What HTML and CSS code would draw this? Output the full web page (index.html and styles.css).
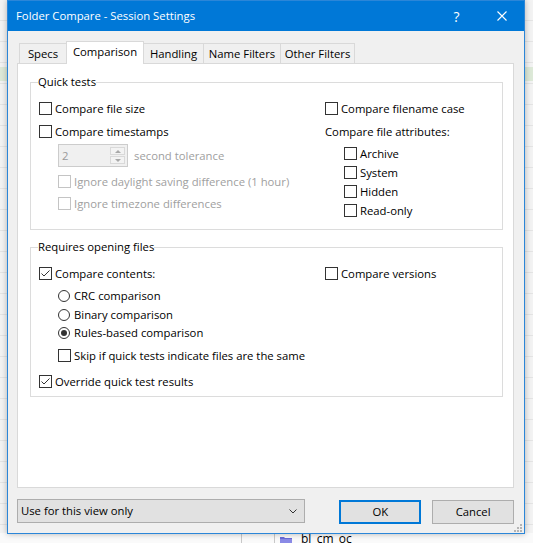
FILE: index.html
```html
<!DOCTYPE html>
<html lang="en">
<head>
<meta charset="utf-8">
<title>Folder Compare - Session Settings</title>
<link rel="stylesheet" href="styles.css">
</head>
<body>
<div class="desktop">
  <div class="app-list">
    <div class="app-sel"></div>
  </div>
  <div class="app-bottom">
    <span class="app-col app-col-a"></span>
    <span class="app-col app-col-b"></span>
    <svg class="app-folder" width="12" height="10" viewBox="0 0 12 10"><path d="M0 2h4l1 1h7v7H0z" fill="#6a6ad8"/><path d="M0 4h12v6H0z" fill="#8a8ae6"/></svg>
    <span class="app-name">bl_cm_oc</span>
  </div>
</div>

<div class="dialog">
  <div class="titlebar">
    <span class="title">Folder Compare - Session Settings</span>
    <span class="tb-btn tb-help">?</span>
    <span class="tb-btn tb-close"><svg width="10" height="10" viewBox="0 0 10 10"><path d="M0.5 0.5L9.5 9.5M9.5 0.5L0.5 9.5" stroke="#fff" stroke-width="1.1"/></svg></span>
  </div>

  <div class="dialog-body">
    <div class="tabs">
      <div class="tab tab-specs">Specs</div>
      <div class="tab tab-comparison active">Comparison</div>
      <div class="tab tab-handling">Handling</div>
      <div class="tab tab-names">Name Filters</div>
      <div class="tab tab-other">Other Filters</div>
    </div>

    <div class="panel">
      <fieldset class="group group-quick">
        <legend>Quick tests</legend>
        <div class="cols">
          <div class="col col-left">
            <div class="opt"><span class="box"></span><span>Compare file size</span></div>
            <div class="opt mt10"><span class="box"></span><span>Compare timestamps</span></div>
            <div class="spin-row indent">
              <div class="spin">
                <span class="spin-val">2</span>
                <span class="spin-btns"><span class="spin-btn"><i class="arr-up"></i></span><span class="spin-btn"><i class="arr-down"></i></span></span>
              </div>
              <span class="spin-lbl">second tolerance</span>
            </div>
            <div class="opt disabled indent mt8"><span class="box"></span><span>Ignore daylight saving difference (1 hour)</span></div>
            <div class="opt disabled indent mt9"><span class="box"></span><span>Ignore timezone differences</span></div>
          </div>
          <div class="col col-right">
            <div class="opt"><span class="box"></span><span>Compare filename case</span></div>
            <div class="opt mt10"><span>Compare file attributes:</span></div>
            <div class="attr-list">
              <div class="opt"><span class="box"></span><span>Archive</span></div>
              <div class="opt"><span class="box"></span><span>System</span></div>
              <div class="opt"><span class="box"></span><span>Hidden</span></div>
              <div class="opt"><span class="box"></span><span>Read-only</span></div>
            </div>
          </div>
        </div>
      </fieldset>

      <fieldset class="group group-open">
        <legend>Requires opening files</legend>
        <div class="cols">
          <div class="col col-left">
            <div class="opt"><span class="box"><svg width="11" height="11" viewBox="0 0 11 11"><path d="M1.5 5.5L4 8L9.5 2.5" fill="none" stroke="#333" stroke-width="1"/></svg></span><span>Compare contents:</span></div>
          </div>
          <div class="col col-right">
            <div class="opt"><span class="box"></span><span>Compare versions</span></div>
          </div>
        </div>
        <div class="opt radio-opt indent mt9"><span class="radio"></span><span>CRC comparison</span></div>
        <div class="opt radio-opt indent mt6"><span class="radio"></span><span>Binary comparison</span></div>
        <div class="opt radio-opt indent mt5"><span class="radio on"></span><span>Rules-based comparison</span></div>
        <div class="opt indent mt10"><span class="box"></span><span>Skip if quick tests indicate files are the same</span></div>
        <div class="opt mt13"><span class="box"><svg width="11" height="11" viewBox="0 0 11 11"><path d="M1.5 5.5L4 8L9.5 2.5" fill="none" stroke="#333" stroke-width="1"/></svg></span><span>Override quick test results</span></div>
      </fieldset>
    </div>

    <div class="bottom-bar">
      <div class="combo">
        <span class="combo-text">Use for this view only</span>
        <svg class="combo-arrow" width="8" height="5" viewBox="0 0 8 5"><path d="M0.5 0.5L4 4L7.5 0.5" fill="none" stroke="#333" stroke-width="1"/></svg>
      </div>
      <div class="btn btn-default">OK</div>
      <div class="btn btn-cancel">Cancel</div>
    </div>
  </div>

  <svg class="grip" width="8" height="8" viewBox="0 0 8 8"><g fill="#b4b4b4"><rect x="6" y="0" width="2" height="2"/><rect x="3" y="3" width="2" height="2"/><rect x="6" y="3" width="2" height="2"/><rect x="0" y="6" width="2" height="2"/><rect x="3" y="6" width="2" height="2"/><rect x="6" y="6" width="2" height="2"/></g></svg>
</div>
</body>
</html>
```

FILE: styles.css
```css
* { box-sizing: border-box; }
html, body { margin: 0; padding: 0; }
body {
  width: 533px;
  height: 543px;
  overflow: hidden;
  position: relative;
  font-family: "Open Sans", "Noto Sans", sans-serif;
  font-size: 11.3px;
  color: #000;
  background: #f5f5f5;
}

/* background application */
.desktop { height: 543px; display: flex; flex-direction: column; }
.app-list {
  flex: 1;
  background: repeating-linear-gradient(to bottom, #f3f3f3 0 20px, #e4e4e4 20px 21px);
}
.app-sel { margin-top: 67px; height: 14px; background: #dde9d8; }
.app-bottom {
  height: 10px;
  background: #fafafa;
  display: flex;
  align-items: flex-start;
  overflow: hidden;
}
.app-col { width: 1px; height: 10px; background: #c8c8c8; flex: none; }
.app-col-a { margin-left: 241px; }
.app-col-b { margin-left: 32px; }
.app-folder { margin: 2px 0 0 5px; flex: none; }
.app-name { margin-left: 9px; font-size: 12px; line-height: 14px; margin-top: -1px; }

/* dialog window */
.dialog {
  position: absolute;
  left: 7px;
  top: 0;
  width: 518px;
  height: 534px;
  background: #f0f0f0;
  border: 1px solid #2b86d8;
  box-shadow: 0 0 6px rgba(0, 0, 0, 0.28);
  display: flex;
  flex-direction: column;
}
.titlebar {
  height: 30px;
  background: #0078d7;
  color: #fff;
  display: flex;
  align-items: center;
  flex: none;
}
.title { flex: 1; padding-left: 8px; line-height: 16px; }
.tb-btn { height: 30px; display: flex; align-items: center; justify-content: center; }
.tb-help { width: 45px; font-size: 14px; }
.tb-close { width: 45px; }

.dialog-body { flex: 1; padding: 10px 10px 0 9px; display: flex; flex-direction: column; }

/* tabs */
.tabs { display: flex; align-items: flex-start; height: 23px; margin-left: 2px; margin-bottom: -1px; }
.tab {
  height: 21px;
  margin-top: 2px;
  margin-left: -1px;
  border: 1px solid #d9d9d9;
  background: #f0f0f0;
  display: flex;
  align-items: center;
  justify-content: center;
  line-height: 16px;
  white-space: nowrap;
}
.tab:first-child { margin-left: 0; }
.tab.active {
  height: 23px;
  margin-top: 0;
  background: #fff;
  border-bottom: none;
  position: relative;
  z-index: 1;
  padding-bottom: 3px;
}
.tab-specs { width: 48px; }
.tab-comparison { width: 78px; }
.tab-handling { width: 61px; }
.tab-names { width: 78px; }
.tab-other { width: 75px; }

/* tab page */
.panel {
  height: 425px;
  background: #fff;
  border: 1px solid #d9d9d9;
  padding: 10px 10px 0 12px;
  flex: none;
}
.group {
  margin: 0;
  min-width: 0;
  border: 1px solid #dcdcdc;
  padding: 12px 8px 12px 8px;
}
.group legend {
  padding: 0;
  margin-left: -1px;
  line-height: 16px;
}
.group-open { margin-top: 9px; padding-bottom: 8px; }

.cols { display: flex; align-items: flex-start; }
.col { display: flex; flex-direction: column; }
.col-left { width: 286px; flex: none; }

.opt { display: flex; align-items: center; height: 13px; gap: 3px; white-space: nowrap; line-height: 15px; }
.indent { margin-left: 19px; }
.mt5 { margin-top: 5px; }
.mt6 { margin-top: 6px; }
.mt8 { margin-top: 8px; }
.mt9 { margin-top: 9px; }
.mt10 { margin-top: 10px; }
.mt13 { margin-top: 13px; }

.box {
  width: 13px;
  height: 13px;
  flex: none;
  border: 1px solid #333;
  background: #fff;
  display: flex;
  align-items: center;
  justify-content: center;
}
.disabled { color: #a0a0a0; }
.disabled .box { border-color: #c4c4c4; }

.radio-opt { gap: 4px; }
.radio {
  width: 12px;
  height: 12px;
  flex: none;
  border: 1px solid #333;
  border-radius: 50%;
  display: flex;
  align-items: center;
  justify-content: center;
}
.radio.on::after { content: ""; width: 6px; height: 6px; border-radius: 50%; background: #333; }

.attr-list { display: flex; flex-direction: column; gap: 6px; margin-top: 9px; margin-left: 19px; }

/* disabled spin box */
.spin-row { display: flex; align-items: center; margin-top: 6px; height: 23px; }
.spin {
  width: 70px;
  height: 23px;
  border: 1px solid #cccccc;
  background: #f0f0f0;
  display: flex;
  padding: 1px 1px 1px 3px;
}
.spin-val { flex: 1; color: #9a9a9a; line-height: 19px; }
.spin-btns { width: 16px; display: flex; flex-direction: column; gap: 1px; padding: 1px 1px 1px 0; }
.spin-btn {
  flex: 1;
  border: 1px solid #d9d9d9;
  background: #f3f3f3;
  display: flex;
  align-items: center;
  justify-content: center;
}
.arr-up, .arr-down { width: 0; height: 0; border-left: 3px solid transparent; border-right: 3px solid transparent; }
.arr-up { border-bottom: 3px solid #a8a8a8; }
.arr-down { border-top: 3px solid #a8a8a8; }
.spin-lbl { margin-left: 6px; color: #a0a0a0; }

/* bottom bar */
.bottom-bar { display: flex; align-items: flex-start; margin-top: 11px; }
.combo {
  width: 289px;
  height: 24px;
  border: 1px solid #adadad;
  background: #e1e1e1;
  display: flex;
  align-items: center;
  padding: 0 7px 0 3px;
}
.combo-text { flex: 1; line-height: 16px; }
.btn {
  width: 82px;
  height: 24px;
  margin-top: 1px;
  background: #e1e1e1;
  border: 1px solid #adadad;
  display: flex;
  align-items: center;
  justify-content: center;
  line-height: 16px;
}
.btn-default { margin-left: 34px; border: 2px solid #0078d7; }
.btn-cancel { margin-left: 11px; }

.grip { position: absolute; right: 2px; bottom: 1px; }
```
